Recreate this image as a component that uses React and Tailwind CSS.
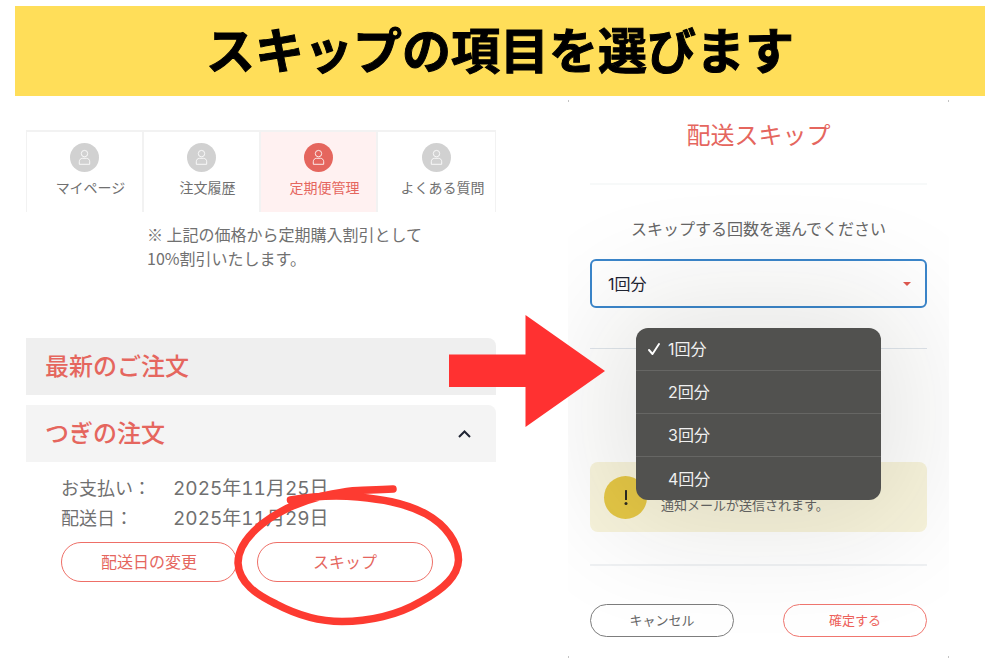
import { useState } from 'react';
import clsx from 'clsx';

const tabs = [
  { id: 'mypage', label: 'マイページ' },
  { id: 'history', label: '注文履歴' },
  { id: 'subscription', label: '定期便管理' },
  { id: 'faq', label: 'よくある質問' },
];

const skipOptions = ['1回分', '2回分', '3回分', '4回分'];

const PersonIcon = () => (
  <svg viewBox="0 0 29 29" className="w-[29px] h-[29px]" fill="none" stroke="#fff" strokeWidth="1" strokeOpacity="0.85" aria-hidden="true">
    <circle cx="14.5" cy="10.6" r="3.2" />
    <path d="M9.3 21.3v-2.600c0-2 1.400-3.400 3.200-3.400h4c1.800 0 3.200 1.400 3.200 3.400v2.600z" strokeLinejoin="round" />
  </svg>
);

const Arrow = () => (
  <svg viewBox="0 0 156 112" className="absolute z-20 -right-[109px] -top-[23px] w-[156px] h-[112px] pointer-events-none" aria-hidden="true">
    <path d="M0 39.500h76.500V0L156 56 76.500 112V72H0z" fill="#ff3131" />
  </svg>
);

// Trazo a mano alrededor del botón de skip
const HandCircle = () => (
  <svg
    viewBox="230 480 240 150"
    className="absolute z-10 -left-[28px] -top-[62px] w-[240px] h-[150px] max-w-none pointer-events-none"
    fill="none"
    stroke="#fd3b31"
    strokeWidth="7.500"
    strokeLinecap="round"
    strokeLinejoin="round"
    aria-hidden="true"
  >
    <path d="M394 489C380 490 370 490 359 490.500C345 491 335 494 323 496C303 501 281 510 263 524C247 537 239 550 239 563C240 583 258 595 277 604C296 614 319 621.500 343 621.500C370 621.500 399 615 421 602C445 589 459 576 459.500 560C459.500 543 447 525 427 514C404 502 380 499 359 497C337 495 315 496 291.500 500" />
  </svg>
);

const SubscriptionPanel = () => {
  const [active, setActive] = useState('subscription');
  const [open, setOpen] = useState(true);

  return (
    <section className="pt-[30px]">
      <nav className="grid grid-cols-4 border-t-2 border-l border-r border-[#f2f2f2]">
        {tabs.map((tab) => (
          <button
            key={tab.id}
            type="button"
            onClick={() => setActive(tab.id)}
            className={clsx(
              'flex flex-col items-center gap-1.5 pt-[11px] pb-3.5 border-r-2 border-[#f2f2f2] last:border-r-0',
              active === tab.id ? 'bg-[#fff1f1] text-[#e5665e]' : 'text-[#707070]'
            )}
          >
            <span className={clsx('rounded-full', active === tab.id ? 'bg-[#e5665e]' : 'bg-[#d1d1d1]')}>
              <PersonIcon />
            </span>
            <span className="pl-3 text-[14px] leading-5 whitespace-nowrap">{tab.label}</span>
          </button>
        ))}
      </nav>

      <p className="mt-2.5 ml-[121px] text-[16px] leading-6 text-[#707070] font-['Noto_Sans_CJK_JP',sans-serif]">
        ※ 上記の価格から定期購入割引として
        <br />
        10%割引いたします。
      </p>

      <div className="relative mt-[68px] flex items-center h-[57px] pl-[19px] bg-[#efefef] rounded-tr-lg">
        <h2 className="text-[24px] leading-8 font-medium text-[#e5665e]">最新のご注文</h2>
        <Arrow />
      </div>

      <div className="mt-2.5 bg-[#f4f4f4] rounded-tr-lg">
        <h2>
          <button
            type="button"
            aria-expanded={open}
            onClick={() => setOpen(!open)}
            className="w-full h-[57px] pl-[19px] pr-[25px] flex items-center justify-between text-[24px] leading-8 font-medium text-[#e5665e]"
          >
            つぎの注文
            <svg viewBox="0 0 13 8" className={clsx('w-[13px] h-2', !open && 'rotate-180')} fill="none" stroke="#1f2433" strokeWidth="2" aria-hidden="true">
              <path d="M1 7l5.500-5.500L12 7" />
            </svg>
          </button>
        </h2>
      </div>

      {open && (
        <div className="mt-3 pl-[35px]">
          <dl className="grid grid-cols-[112px_1fr] text-[18px] leading-[30px] text-[#707070] tabular-nums">
            <dt>お支払い：</dt>
            <dd className="text-[19px]">2025年11月25日</dd>
            <dt>配送日：</dt>
            <dd className="text-[19px]">2025年11月29日</dd>
          </dl>
          <div className="mt-2 flex gap-5">
            <button type="button" className="w-44 h-10 rounded-full border border-[#ee6f67] text-[16px] text-[#e5665e]">
              配送日の変更
            </button>
            <div className="relative">
              <button type="button" className="w-44 h-10 rounded-full border border-[#ee6f67] text-[16px] text-[#e5665e]">
                スキップ
              </button>
              <HandCircle />
            </div>
          </div>
        </div>
      )}
    </section>
  );
};

const SkipPanel = () => {
  const [count, setCount] = useState('1回分');

  return (
    <section className="relative overflow-hidden px-[22px] pt-5 pb-[21px]">
      <span className="absolute left-0 top-0 w-px h-0.5 bg-[#c4c4c4]" />
      <span className="absolute right-0 top-0 w-px h-0.5 bg-[#c4c4c4]" />
      <span className="absolute left-0 bottom-0 w-px h-0.5 bg-[#c4c4c4]" />
      <span className="absolute right-0 bottom-0 w-px h-0.5 bg-[#c4c4c4]" />

      <h2 className="text-center text-[24px] leading-8 text-[#e5665e]">配送スキップ</h2>
      <hr className="mt-[31px] border-t-2 border-[#f7f9f9]" />

      <label htmlFor="skip-count" className="block mt-8 text-center text-[16px] leading-6 text-[#666]">
        スキップする回数を選んでください
      </label>
      <div className="relative mt-[18px]">
        <select
          id="skip-count"
          value={count}
          onChange={(e) => setCount(e.target.value)}
          className="block w-full h-[49px] pl-4 pr-10 appearance-none rounded-md border-2 border-[#3b86cb] bg-transparent text-[16px] text-[#1f2433] outline-none"
        >
          {skipOptions.map((opt) => (
            <option key={opt}>{opt}</option>
          ))}
        </select>
        <svg viewBox="0 0 8 4" className="absolute right-4 top-[23px] w-2 h-1 pointer-events-none" aria-hidden="true">
          <path d="M0 0h8L4 4z" fill="#e0584f" />
        </svg>

        <ul className="absolute z-10 top-[69px] left-[46px] right-[46px] rounded-xl bg-[#51514f] shadow-[0_0_120px_30px_rgba(30,30,10,0.11)] divide-y divide-[#666664]">
          {skipOptions.map((opt) => (
            <li key={opt} className="h-[43px]">
              <button
                type="button"
                aria-pressed={count === opt}
                onClick={() => setCount(opt)}
                className="w-full h-full flex items-center pl-3 text-[16px] text-[#f0f0f0]"
              >
                <span className="w-5">
                  {count === opt && (
                    <svg viewBox="0 0 12 12" className="w-3 h-3" fill="none" stroke="#fff" strokeWidth="1.900" strokeLinecap="round" strokeLinejoin="round" aria-hidden="true">
                      <path d="M1 7l3.500 4L11 1" />
                    </svg>
                  )}
                </span>
                {opt}
              </button>
            </li>
          ))}
        </ul>
      </div>

      <hr className="mt-10 border-[#dfe5ec]" />

      <div className="mt-[113px] h-[70px] flex items-center gap-3.5 px-3.5 rounded-lg bg-[#f8f4dc]">
        <span className="shrink-0 w-[43px] h-[43px] rounded-full bg-[#e5c746] flex items-center justify-center">
          <svg viewBox="0 0 4 15" className="w-1 h-[15px]" fill="#2b2922" aria-hidden="true">
            <rect x="1" y="0" width="2" height="10" rx="0.500" />
            <circle cx="2" cy="13.500" r="1.500" />
          </svg>
        </span>
        <p className="pt-4 text-[13px] leading-5 text-[#666]">通知メールが送信されます。</p>
      </div>

      <hr className="mt-8 border-t-2 border-[#f0f2f4]" />

      <div className="mt-[38px] flex justify-between">
        <button type="button" className="w-36 h-[33px] rounded-full border border-[#7d7d7d] text-[13px] text-[#666]">
          キャンセル
        </button>
        <button type="button" className="w-36 h-[33px] rounded-full border border-[#f0766f] text-[13px] text-[#ee625b]">
          確定する
        </button>
      </div>
    </section>
  );
};

const App = () => {
  return (
    <div className="min-h-screen overflow-x-hidden bg-white pt-1.5 font-['Inter','Noto_Sans_CJK_JP',sans-serif]">
      <header className="mx-[15px] h-[90px] flex items-center justify-center bg-[#ffde59]">
        <h1 className="text-[49px] leading-none font-bold text-black [-webkit-text-stroke:1px_black]">スキップの項目を選びます</h1>
      </header>
      <main className="mt-1 pl-[26px] pr-[51px] grid grid-cols-[470fr_381fr] gap-[72px]">
        <SubscriptionPanel />
        <SkipPanel />
      </main>
    </div>
  );
};

export default App;
